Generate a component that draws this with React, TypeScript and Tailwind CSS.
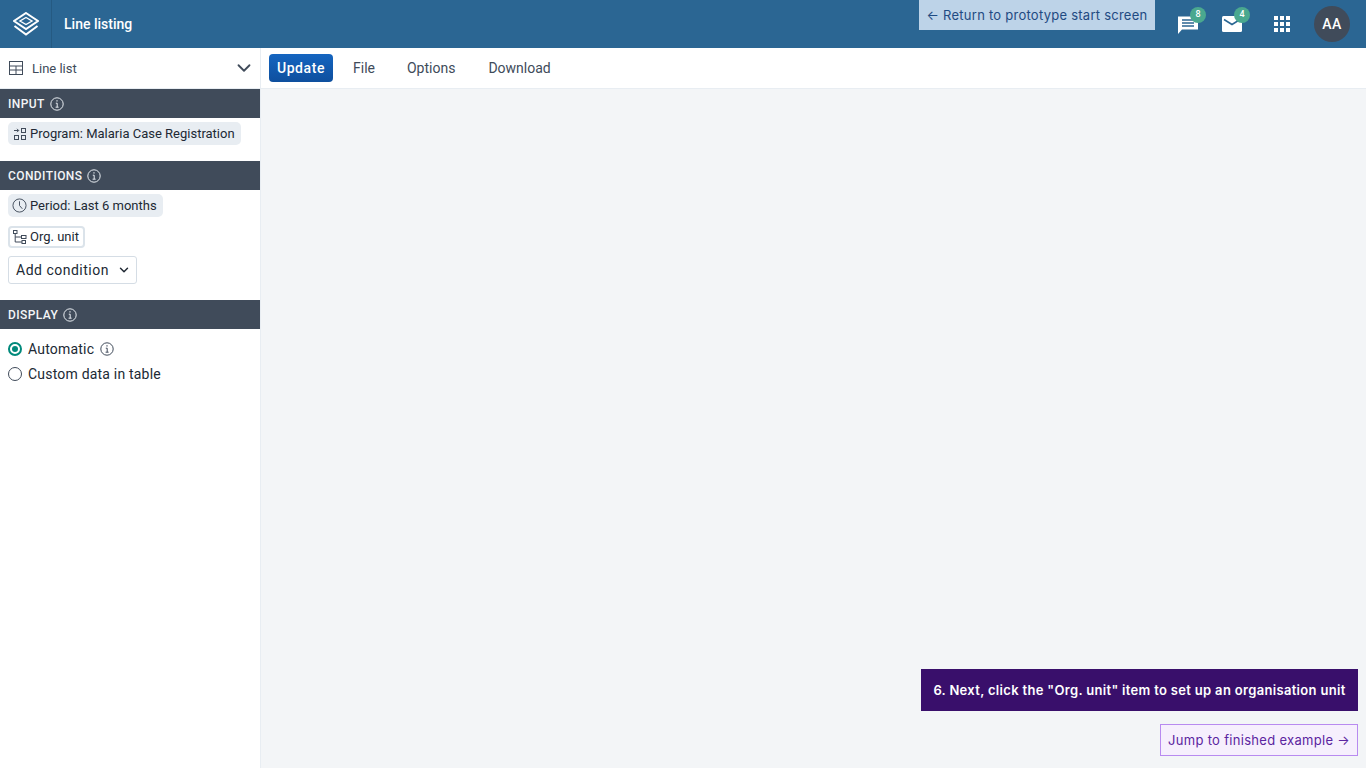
import { ChevronDown } from "lucide-react";

function InfoIcon({ className }: { className: string }) {
  return (
    <svg viewBox="0 0 14 14" fill="none" stroke="currentColor" strokeWidth="1" className={className}>
      <circle cx="7" cy="7" r="6.2" />
      <path d="M5.8 6.2H7.2V10M5.6 10.2H8.6" />
      <path d="M6.4 3.8h1.2" strokeWidth="1.3" />
    </svg>
  );
}

function SectionHeader({ title }: { title: string }) {
  return (
    <div className="flex h-[29px] items-center gap-[5px] bg-[#404b5a] px-2 text-xs font-medium tracking-[0.4px] text-[#f3f5f7]">
      <span>{title}</span>
      <InfoIcon className="h-[14px] w-[14px] text-[#e8edf2]" />
    </div>
  );
}

function ProgramIcon() {
  return (
    <svg viewBox="0 0 14 14" fill="none" stroke="#404b5a" strokeWidth="1" className="h-[14px] w-[14px] shrink-0">
      <rect x="8.5" y="1.5" width="4" height="4" />
      <rect x="1.5" y="8.5" width="4" height="4" />
      <rect x="8.5" y="8.5" width="4" height="4" />
      <path d="M1 3.5h4.5M4 1.8l1.7 1.7L4 5.2" />
    </svg>
  );
}

function ClockIcon() {
  return (
    <svg viewBox="0 0 16 16" fill="none" stroke="#404b5a" strokeWidth="1" className="h-[15px] w-[15px] shrink-0">
      <circle cx="8" cy="8" r="7" />
      <path d="M8 3.5V8l3 3.5" />
    </svg>
  );
}

function OrgUnitIcon() {
  return (
    <svg viewBox="0 0 14 14" fill="none" stroke="#404b5a" strokeWidth="1" className="h-[14px] w-[14px] shrink-0">
      <rect x="0.5" y="0.5" width="3.5" height="3" />
      <rect x="8.5" y="5.5" width="4.5" height="3" />
      <rect x="9" y="10.5" width="3.5" height="3" />
      <path d="M2.2 3.5V12H9M2.2 7H8.5" />
    </svg>
  );
}

function LogoIcon() {
  return (
    <svg viewBox="0 0 26 24" fill="none" stroke="white" strokeWidth="2" className="h-6 w-[26px]">
      <path d="M13 1 25 9 13 17 1 9Z" />
      <path d="M13 5.5 19 9 13 12.5 7 9Z" strokeWidth="1.4" />
      <path d="M1.5 14 13 22.5 24.5 14" />
    </svg>
  );
}

function AppsIcon() {
  const dots = [0, 1, 2, 3, 4, 5, 6, 7, 8];
  return (
    <div className="grid h-4 w-4 grid-cols-3 gap-[2px]">
      {dots.map((d) => (
        <span key={d} className="bg-white" />
      ))}
    </div>
  );
}

function Badge({ value, className }: { value: string; className: string }) {
  return (
    <span className={`absolute right-[-8px] flex h-4 w-4 items-center justify-center rounded-full bg-[#4aa88f] text-[9px] font-medium text-white ${className}`}>
      {value}
    </span>
  );
}

export default function App() {
  return (
    <div className="relative flex h-[768px] flex-col overflow-hidden bg-[#f3f5f7] font-['Roboto',sans-serif] text-[#212934]">
      <header className="flex h-12 shrink-0 items-center bg-[#2b6693] text-white">
        <div className="flex h-12 w-[52px] items-center justify-center border-r border-[#255a82]">
          <LogoIcon />
        </div>
        <span className="ml-3 text-sm font-medium">Line listing</span>
        <div className="ml-auto flex items-center">
          <div className="relative mr-6 h-5 w-5">
            <svg viewBox="0 0 20 21" fill="white" className="absolute left-0 top-[-1px] h-[21px] w-5">
              <path d="M0 3.5h20v13H4L0 21Z" />
              <path d="M4 7h12M4 10h12M4 13h12" stroke="#2b6693" strokeWidth="1.3" />
            </svg>
            <Badge value="8" className="top-[-7px]" />
          </div>
          <div className="relative mr-8 h-4 w-5">
            <svg viewBox="0 0 20 16" className="absolute left-0 top-0 h-4 w-5">
              <rect width="20" height="16" rx="1.5" fill="white" />
              <path d="M2 3.5 10 8.5 18 3.5" fill="none" stroke="#2b6693" strokeWidth="1.5" />
            </svg>
            <Badge value="4" className="top-[-9px]" />
          </div>
          <AppsIcon />
          <div className="ml-6 mr-4 flex h-9 w-9 items-center justify-center rounded-full bg-[#404b5a] text-sm font-medium tracking-[0.5px] text-white">
            AA
          </div>
        </div>
      </header>

      <div className="flex min-h-0 flex-1">
        <aside className="w-[261px] shrink-0 border-r border-[#e8edf2] bg-white">
          <div className="flex h-[41px] items-center border-b border-[#e8edf2] pl-[9px] pr-[5px]">
            <svg viewBox="0 0 14 14" fill="none" stroke="#404b5a" strokeWidth="1" className="h-[14px] w-[14px]">
              <rect x="0.5" y="0.5" width="13" height="13" />
              <path d="M0.5 5H13.5M0.5 9H13.5M7 5V13.5" />
            </svg>
            <span className="ml-[9px] pt-[1px] text-[13px] text-[#404b5a]">Line list</span>
            <ChevronDown className="ml-auto h-[22px] w-[22px] text-[#404b5a]" strokeWidth={2} />
          </div>

          <SectionHeader title="INPUT" />
          <div className="flex h-[43px] items-start px-2 pt-1">
            <div className="flex h-[23px] items-center gap-[3px] rounded-[5px] bg-[#e8edf2] pl-[5px] pr-[6px] text-[13px]">
              <ProgramIcon />
              <span>Program: Malaria Case Registration</span>
            </div>
          </div>

          <SectionHeader title="CONDITIONS" />
          <div className="flex h-[110px] flex-col items-start px-2 pt-1">
            <div className="flex h-[23px] items-center gap-[3px] rounded-[5px] bg-[#e8edf2] pl-[4px] pr-[6px] text-[13px]">
              <ClockIcon />
              <span>Period: Last 6 months</span>
            </div>
            <div className="mt-[9px] flex h-[22px] items-center gap-[3px] rounded-[4px] border-2 border-[#dbe3ea] pl-[3px] pr-[4px] text-[13px]">
              <OrgUnitIcon />
              <span>Org. unit</span>
            </div>
            <button className="mt-2 flex h-[28px] items-center gap-2 rounded-[3px] border border-[#d5dde5] bg-white pl-[7px] pr-[5px] text-sm tracking-[0.5px]">
              Add condition
              <ChevronDown className="h-[14px] w-[14px]" strokeWidth={2.5} />
            </button>
          </div>

          <SectionHeader title="DISPLAY" />
          <div className="flex flex-col gap-[7px] px-2 pt-[11px] text-sm tracking-[0.2px]">
            <label className="flex h-[18px] items-center gap-[6px]">
              <span className="flex h-[14px] w-[14px] items-center justify-center rounded-full border-2 border-[#00897b]">
                <span className="h-[6px] w-[6px] rounded-full bg-[#00897b]" />
              </span>
              <span>Automatic</span>
              <InfoIcon className="h-[14px] w-[14px] text-[#404b5a]" />
            </label>
            <label className="flex h-[18px] items-center gap-[6px]">
              <span className="h-[14px] w-[14px] rounded-full border border-[#404b5a]" />
              <span>Custom data in table</span>
            </label>
          </div>
        </aside>

        <main className="min-w-0 flex-1">
          <div className="flex h-[41px] items-center border-b border-[#e8edf2] bg-white pb-[1px] pl-2 text-sm text-[#404b5a]">
            <button className="h-[28px] w-[64px] rounded-[4px] bg-gradient-to-b from-[#1565c0] to-[#0e4f9e] text-sm font-medium tracking-[0.6px] text-white">
              Update
            </button>
            <span className="ml-5">File</span>
            <span className="ml-8">Options</span>
            <span className="ml-[33px]">Download</span>
          </div>
        </main>
      </div>

      <a className="absolute left-[919px] top-0 flex h-[30px] w-[236px] items-center justify-center bg-[#bdd3e8] pt-[1px] font-['Inter',sans-serif] text-[13px] tracking-[0.25px] text-[#1f4a82]">
        ← Return to prototype start screen
      </a>
      <div className="absolute left-[921px] top-[669px] flex h-[42px] w-[437px] items-center justify-center bg-[#390f6b] pt-[1px] font-['Inter',sans-serif] text-[13px] font-semibold tracking-[0.32px] text-white">
        6. Next, click the "Org. unit" item to set up an organisation unit
      </div>
      <a className="absolute left-[1160px] top-[724px] flex h-8 w-[198px] items-center justify-center border border-[#b88af0] bg-[#f6effd] pt-[1px] font-['Inter',sans-serif] text-[13px] tracking-[0.3px] text-[#5b25a0]">
        Jump to finished example →
      </a>
    </div>
  );
}
